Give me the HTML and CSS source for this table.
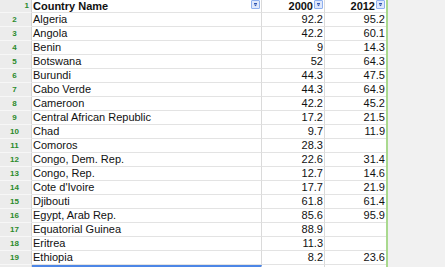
FILE: index.html
```html
<!DOCTYPE html>
<html>
<head>
<meta charset="utf-8">
<link rel="stylesheet" href="styles.css">
</head>
<body>
<div class="sheet">
  <div class="grid">
    <div class="rn hd">1</div>
    <div class="c a hd"><span class="lbl">Country Name</span><span class="flt"><svg width="7" height="7" viewBox="0 0 7 7"><path d="M2 2.5H5" stroke="#2f55b0" stroke-width="1"/><path d="M1.8 3.5H5.2L3.5 5.3Z" fill="#2f55b0"/></svg></span></div>
    <div class="c n hd"><span class="lbl">2000</span><span class="flt"><svg width="7" height="7" viewBox="0 0 7 7"><path d="M2 2.5H5" stroke="#2f55b0" stroke-width="1"/><path d="M1.8 3.5H5.2L3.5 5.3Z" fill="#2f55b0"/></svg></span></div>
    <div class="c n last hd"><span class="lbl">2012</span><span class="flt"><svg width="7" height="7" viewBox="0 0 7 7"><path d="M2 2.5H5" stroke="#2f55b0" stroke-width="1"/><path d="M1.8 3.5H5.2L3.5 5.3Z" fill="#2f55b0"/></svg></span></div>

    <div class="rn">2</div><div class="c a">Algeria</div><div class="c n">92.2</div><div class="c n last">95.2</div>
    <div class="rn">3</div><div class="c a">Angola</div><div class="c n">42.2</div><div class="c n last">60.1</div>
    <div class="rn">4</div><div class="c a">Benin</div><div class="c n">9</div><div class="c n last">14.3</div>
    <div class="rn">5</div><div class="c a">Botswana</div><div class="c n">52</div><div class="c n last">64.3</div>
    <div class="rn">6</div><div class="c a">Burundi</div><div class="c n">44.3</div><div class="c n last">47.5</div>
    <div class="rn">7</div><div class="c a">Cabo Verde</div><div class="c n">44.3</div><div class="c n last">64.9</div>
    <div class="rn">8</div><div class="c a">Cameroon</div><div class="c n">42.2</div><div class="c n last">45.2</div>
    <div class="rn">9</div><div class="c a">Central African Republic</div><div class="c n">17.2</div><div class="c n last">21.5</div>
    <div class="rn">10</div><div class="c a">Chad</div><div class="c n">9.7</div><div class="c n last">11.9</div>
    <div class="rn">11</div><div class="c a">Comoros</div><div class="c n">28.3</div><div class="c n last"></div>
    <div class="rn">12</div><div class="c a">Congo, Dem. Rep.</div><div class="c n">22.6</div><div class="c n last">31.4</div>
    <div class="rn">13</div><div class="c a">Congo, Rep.</div><div class="c n">12.7</div><div class="c n last">14.6</div>
    <div class="rn">14</div><div class="c a">Cote d'Ivoire</div><div class="c n">17.7</div><div class="c n last">21.9</div>
    <div class="rn">15</div><div class="c a">Djibouti</div><div class="c n">61.8</div><div class="c n last">61.4</div>
    <div class="rn">16</div><div class="c a">Egypt, Arab Rep.</div><div class="c n">85.6</div><div class="c n last">95.9</div>
    <div class="rn">17</div><div class="c a">Equatorial Guinea</div><div class="c n">88.9</div><div class="c n last"></div>
    <div class="rn">18</div><div class="c a">Eritrea</div><div class="c n">11.3</div><div class="c n last"></div>
    <div class="rn">19</div><div class="c a">Ethiopia</div><div class="c n">8.2</div><div class="c n last">23.6</div>

    <div class="rn"></div><div class="c a sel"></div><div class="c n"></div><div class="c n last"></div>
  </div>
  <div class="side"></div>
</div>
</body>
</html>
```

FILE: styles.css
```css
html, body {
  margin: 0;
  padding: 0;
  background: #ffffff;
  overflow: hidden;
}

.sheet {
  display: flex;
  width: 445px;
  height: 267px;
  overflow: hidden;
  font-family: "Liberation Sans", Arial, sans-serif;
  color: #111111;
}

.grid {
  display: grid;
  grid-template-columns: 32px 230px 63px 61px;
  grid-auto-rows: 14px;
  grid-template-rows: 13px;
  border-right: 2px solid #a9d98e;
  background: #ffffff;
  align-content: start;
}

.side {
  flex: 1;
  background: #f1f1f1;
}

.rn {
  background: #ececec;
  border-right: 1px solid #d3d3d3;
  border-bottom: 1px solid #f7f7f7;
  color: #2a8a2a;
  font-size: 8px;
  font-weight: bold;
  display: flex;
  align-items: center;
  justify-content: center;
  padding-right: 2px;
}

.c {
  font-size: 11px;
  line-height: 13px;
  white-space: nowrap;
  overflow: hidden;
  border-bottom: 1px solid #e3e3e3;
  border-right: 1px solid #dadada;
}

.c.last {
  border-right: none;
}

.a {
  padding-left: 1px;
}

.n {
  text-align: right;
  padding-right: 1px;
}

.hd {
  font-weight: bold;
  line-height: 12px;
  display: flex;
  justify-content: flex-end;
  align-items: flex-start;
  gap: 1px;
}

.c.a.hd .lbl {
  margin-right: auto;
}

.c.hd {
  padding-right: 1px;
}

.flt {
  display: block;
  width: 7px;
  height: 7px;
  border: 1px solid #8fb0ef;
  background: #dfe8fb;
  border-radius: 1px;
}

.flt svg {
  display: block;
}

.sel {
  border-top: 2px solid #4d86e6;
  border-bottom: none;
}
```
